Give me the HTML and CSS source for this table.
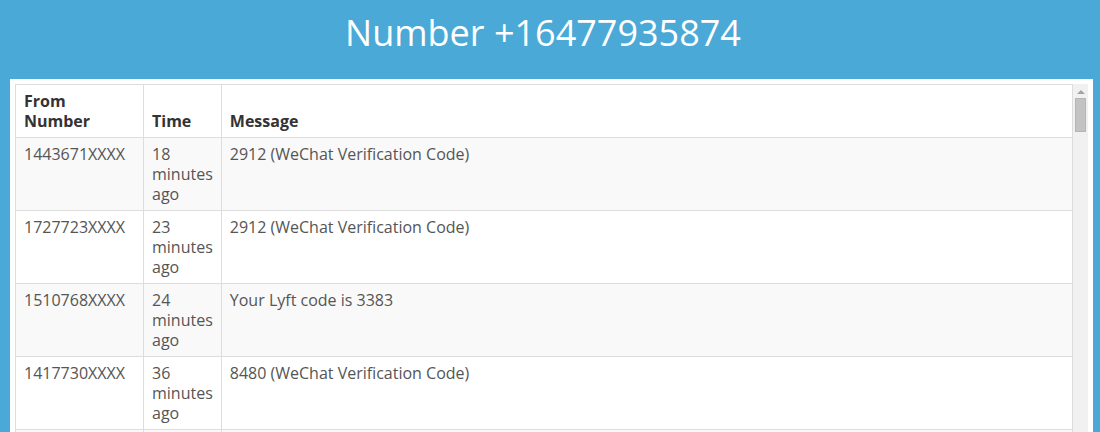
FILE: index.html
```html
<!DOCTYPE html>
<html lang="en">
<head>
    <meta charset="UTF-8">
    <meta name="viewport" content="width=device-width, initial-scale=1.0">
    <title>Number +16477935874</title>
    <link rel="stylesheet" href="styles.css">
</head>
<body>
    <div class="header">
        <h1>Number +16477935874</h1>
    </div>

    <div class="panel">
        <div class="messages">
            <div class="messages-list">
                <table class="sms-table">
                    <thead>
                        <tr>
                            <th class="col-from">From<br>Number</th>
                            <th class="col-time">Time</th>
                            <th>Message</th>
                        </tr>
                    </thead>
                    <tbody>
                        <tr>
                            <td>1443671XXXX</td>
                            <td>18 minutes ago</td>
                            <td>2912 (WeChat Verification Code)</td>
                        </tr>
                        <tr>
                            <td>1727723XXXX</td>
                            <td>23 minutes ago</td>
                            <td>2912 (WeChat Verification Code)</td>
                        </tr>
                        <tr>
                            <td>1510768XXXX</td>
                            <td>24 minutes ago</td>
                            <td>Your Lyft code is 3383</td>
                        </tr>
                        <tr>
                            <td>1417730XXXX</td>
                            <td>36 minutes ago</td>
                            <td>8480 (WeChat Verification Code)</td>
                        </tr>
                        <tr>
                            <td>1301482XXXX</td>
                            <td>41 minutes ago</td>
                            <td>5517 (WeChat Verification Code)</td>
                        </tr>
                    </tbody>
                </table>
            </div>
            <!-- scroll bar of the message box -->
            <div class="scrollbar">
                <span class="scroll-arrow"></span>
                <span class="scroll-thumb"></span>
            </div>
        </div>
    </div>
</body>
</html>
```

FILE: styles.css
```css
* {
    box-sizing: border-box;
}

body {
    margin: 0;
    background: #4aa9d6;
    font-family: 'Open Sans', 'Noto Sans', sans-serif;
    color: #333;
    overflow: hidden;
}

.header {
    height: 79px;
    text-align: center;
    padding-right: 14px;
}

.header h1 {
    margin: 0;
    padding-top: 9px;
    font-size: 36px;
    font-weight: 400;
    line-height: 48px;
    color: #fff;
}

.panel {
    background: #fff;
    margin: 0 7px 0 10px;
    padding: 5px;
}

.messages {
    display: flex;
    height: 400px;
    overflow: hidden;
}

.messages-list {
    flex: 1;
}

.scrollbar {
    width: 15px;
    flex-shrink: 0;
    background: #f1f1f1;
    display: flex;
    flex-direction: column;
    align-items: center;
    padding-top: 6px;
}

.scroll-arrow {
    width: 0;
    height: 0;
    border-left: 4px solid transparent;
    border-right: 4px solid transparent;
    border-bottom: 4px solid #a3a3a3;
}

.scroll-thumb {
    width: 11px;
    height: 34px;
    margin-top: 4px;
    background: #c3c3c3;
    border: 1px solid #b5b5b5;
}

.sms-table {
    width: 100%;
    border-collapse: collapse;
    border: 1px solid #ddd;
    font-size: 16px;
    line-height: 20px;
}

.sms-table th,
.sms-table td {
    border: 1px solid #ddd;
    padding: 6px 8px;
    text-align: left;
    vertical-align: top;
}

.sms-table th {
    vertical-align: bottom;
    font-weight: 700;
    color: #333;
}

.sms-table td {
    color: #555;
}

.col-from {
    width: 128px;
}

.col-time {
    width: 77px;
}

.sms-table tbody tr:nth-child(odd) {
    background: #f9f9f9;
}
```
